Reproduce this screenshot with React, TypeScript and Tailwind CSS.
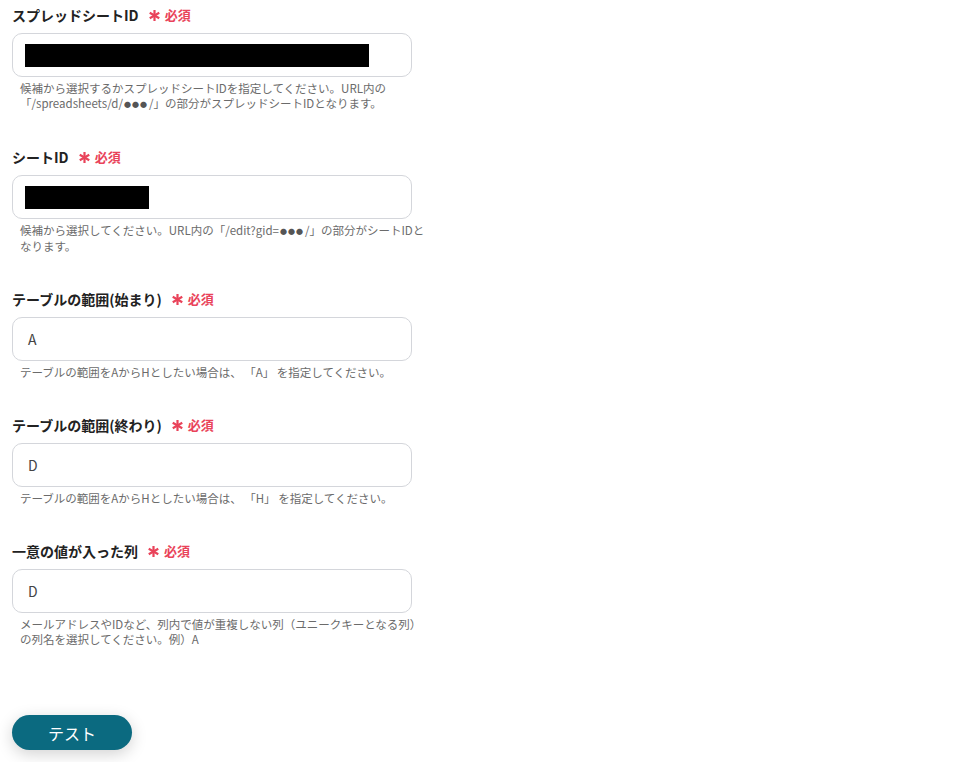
import React from 'react';

type Field = {
  label: string;
  value?: string;
  mask?: number;
  help: React.ReactNode[];
};

const Dots = () => <span className="mx-[1px] align-[1px] text-[7px] tracking-[1px] text-[#555]">●●●</span>;

const fields: Field[] = [
  {
    label: 'スプレッドシートID',
    mask: 344,
    help: [
      '候補から選択するかスプレッドシートIDを指定してください。URL内の',
      <>
        「/spreadsheets/d/<Dots />/」の部分がスプレッドシートIDとなります。
      </>,
    ],
  },
  {
    label: 'シートID',
    mask: 124,
    help: [
      <>
        候補から選択してください。URL内の「/edit?gid=<Dots />/」の部分がシートIDと
      </>,
      'なります。',
    ],
  },
  {
    label: 'テーブルの範囲(始まり)',
    value: 'A',
    help: ['テーブルの範囲をAからHとしたい場合は、 「A」 を指定してください。'],
  },
  {
    label: 'テーブルの範囲(終わり)',
    value: 'D',
    help: ['テーブルの範囲をAからHとしたい場合は、 「H」 を指定してください。'],
  },
  {
    label: '一意の値が入った列',
    value: 'D',
    help: [
      'メールアドレスやIDなど、列内で値が重複しない列（ユニークキーとなる列）',
      'の列名を選択してください。例）A',
    ],
  },
];

function Asterisk() {
  return (
    <svg width="11" height="11" viewBox="0 0 12 12" stroke="#e9435a" strokeWidth="2.4" strokeLinecap="butt">
      <line x1="6" y1="0" x2="6" y2="12" />
      <line x1="0.8" y1="3" x2="11.2" y2="9" />
      <line x1="0.8" y1="9" x2="11.2" y2="3" />
    </svg>
  );
}

export default function App() {
  return (
    <div
      className="min-h-screen w-[972px] bg-white pl-3 pt-[5px]"
      style={{ fontFamily: '"Noto Sans CJK JP", "Noto Sans", sans-serif' }}
    >
      <div className="flex w-[400px] flex-col gap-[35px]">
        {fields.map((f) => (
          <div key={f.label} className="flex flex-col">
            <div className="flex h-5 items-center gap-[10px]">
              <span className="text-[14px] font-bold text-[#222]">{f.label}</span>
              <span className="flex items-center gap-[5px] font-bold text-[#e9435a]">
                <Asterisk />
                <span className="text-[13px]">必須</span>
              </span>
            </div>
            <div className="mt-2 flex h-11 items-center rounded-[10px] border border-[#d4d6db] bg-white px-3">
              {f.mask ? (
                <div className="h-[23px] bg-black" style={{ width: f.mask }} />
              ) : (
                <span className="pl-[3px] text-[14px] text-[#444]">{f.value}</span>
              )}
            </div>
            <div className="mt-1 whitespace-nowrap pl-2 text-[11.5px] leading-[15px] text-[#6b6b6b]">
              {f.help.map((l, i) => (
                <p key={i}>{l}</p>
              ))}
            </div>
          </div>
        ))}
      </div>
      <button className="mt-[68px] h-[35px] w-[120px] rounded-full bg-[#0b6a80] text-[16px] text-white shadow-[0_4px_16px_rgba(0,0,0,0.18)]">
        テスト
      </button>
    </div>
  );
}
